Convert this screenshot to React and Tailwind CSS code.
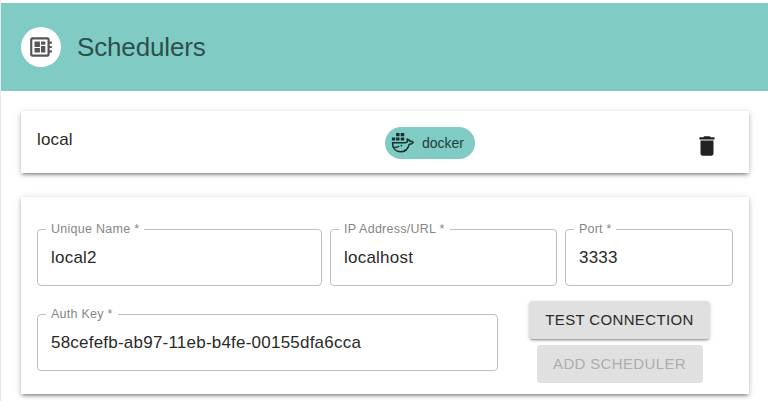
import React from "react";
import clsx from "clsx";
import { MdDelete, MdDeveloperBoard } from "react-icons/md";

function DockerIcon() {
  return (
    <svg width="24" height="24" viewBox="0 0 24 24" className="shrink-0" fill="#12302d">
      <path d="M5.100 2h3.400v3.300H5.100zM9.700 2h3.500v3.300H9.700zM.9 6.500h3.300v3.100H.9zM5.100 6.500h3.400v3.100H5.100zM9.700 6.500h3.500v3.100H9.700z" />
      <path
        d="M1.500 11.700h12.300c1.700 0 2.700-.6 2.700-1.700 0-.7-.3-1.300-.5-1.900 1.500.3 2.500 1.100 3 2.300 1.100-.3 2.200.1 3.200.9-.8 1.300-2.100 1.900-3.900 1.900-1.400 4.900-4.300 7.600-8.700 7.600-5 0-8.100-3.500-8.100-9.100z"
        fill="none"
        stroke="#12302d"
        strokeWidth="1.500"
        strokeLinejoin="round"
      />
      <path d="M2.300 16.200c2.500.4 4.500-.1 6-1.300" fill="none" stroke="#12302d" strokeWidth="1.300" />
      <circle cx="10.400" cy="14.600" r=".9" />
    </svg>
  );
}

const cardShadow =
  "shadow-[0_3px_3px_-2px_rgba(0,0,0,0.3),0_2px_4px_0_rgba(0,0,0,0.2),0_1px_8px_0_rgba(0,0,0,0.12)]";

function Field({ label, value, labelClass, className }) {
  return (
    <fieldset
      className={clsx("h-[65px] min-w-0 rounded-[4px] border border-[#c0c0c0] pl-[8px]", className)}
    >
      <legend
        className={clsx(
          "h-[16px] px-[5px] text-[12.5px] leading-[16px] whitespace-nowrap text-[#868686]",
          labelClass
        )}
      >
        {label}
      </legend>
      <div className="mt-[10px] pl-[5px] text-[17px] leading-[22px] tracking-[0.22px] text-[#2a2a2a]">{value}</div>
    </fieldset>
  );
}

export default function App() {
  return (
    <div className="h-[401px] w-full overflow-hidden border-l border-[#e8e8e8] bg-white pt-[3px] font-['Liberation_Sans',Arial,sans-serif] text-[#2a2a2a]">
      <header className="flex h-[88px] items-center bg-[#80cbc4] pl-5">
        <div className="flex size-10 items-center justify-center rounded-full bg-white">
          <MdDeveloperBoard className="size-[26px] text-[#555]" />
        </div>
        <h1 className="ml-4 text-[26px] leading-8 tracking-[-0.15px] text-[#2d504d]">Schedulers</h1>
      </header>

      <main className="flex flex-col gap-6 pt-5 pr-[19px] pl-5">
        <section className={clsx("flex h-[62px] px-4", cardShadow)}>
          <div className="w-[348px] pt-[18px] text-[17px] leading-[22px] tracking-[0.15px]">local</div>
          <div className="mt-4 flex h-8 w-[90px] items-center rounded-full bg-[#80cbc4] pl-[6px]">
            <DockerIcon />
            <span className="ml-[7px] text-[14px] leading-5 text-[#1f3d3a]">docker</span>
          </div>
          <button className="mt-[22px] mr-[13px] ml-auto size-[26px]">
            <MdDelete className="size-[26px] text-[#222]" />
          </button>
        </section>

        <section className={clsx("h-[197px] px-4 pt-[24px]", cardShadow)}>
          <div className="flex gap-2">
            <Field label="Unique Name *" value="local2" labelClass="tracking-[0.28px]" className="w-[285px]" />
            <Field label="IP Address/URL *" value="localhost" labelClass="tracking-[0.25px]" className="w-[227px]" />
            <Field label="Port *" value="3333" labelClass="tracking-[0.2px]" className="w-[168px]" />
          </div>
          <div className="mt-[20px] flex">
            <Field
              label="Auth Key *"
              value="58cefefb-ab97-11eb-b4fe-00155dfa6cca"
              labelClass="tracking-[0.25px]"
              className="w-[461px]"
            />
            <div className="-mt-[5px] flex flex-1 flex-col items-center gap-[6px] pl-[8px]">
              <button className="h-[38px] w-[181px] rounded-[4px] bg-[#e0e0e0] text-[15px] tracking-[0.35px] whitespace-nowrap shadow-[0_3px_1px_-2px_rgba(0,0,0,0.2),0_2px_2px_0_rgba(0,0,0,0.14),0_1px_5px_0_rgba(0,0,0,0.12)]">
                TEST CONNECTION
              </button>
              <button
                disabled
                className="h-[38px] w-[166px] rounded-[4px] bg-[#e0e0e0] text-[15px] tracking-[0.35px] whitespace-nowrap text-[#adadad]"
              >
                ADD SCHEDULER
              </button>
            </div>
          </div>
        </section>
      </main>
    </div>
  );
}
